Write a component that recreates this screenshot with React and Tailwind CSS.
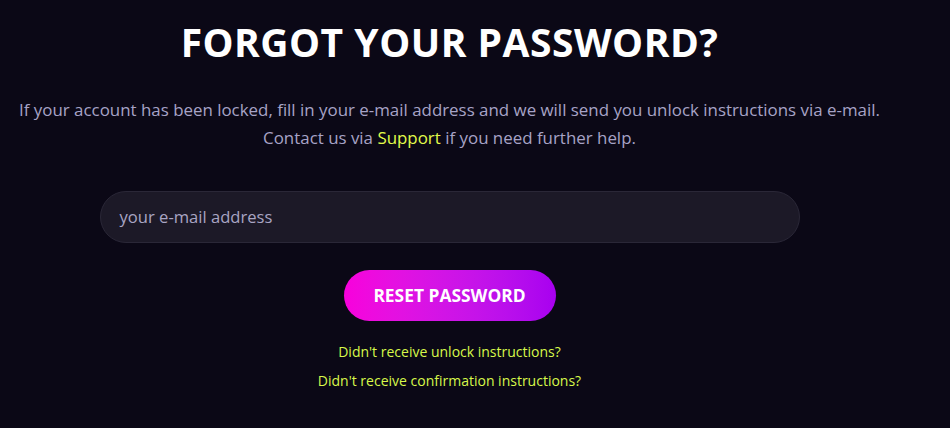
export default function App() {
  return (
    <div className="min-h-[428px] w-full bg-[#0b0816]" style={{ fontFamily: '"Open Sans", "Noto Sans", sans-serif' }}>
      <div className="flex w-[899px] flex-col items-center pt-[18px]">
        <h1 className="text-[39px] font-bold leading-[48px] tracking-[0.5px] text-white">FORGOT YOUR PASSWORD?</h1>
        <p className="mt-[30px] text-center text-[16.9px] leading-[28px] text-[#a7a3c6]">
          If your account has been locked, fill in your e-mail address and we will send you unlock instructions via e-mail.
          <br />
          Contact us via <span className="text-[#e2fb4a]">Support</span> if you need further help.
        </p>
        <div className="mt-[39px] flex h-[52px] w-[700px] items-center rounded-full border border-[#2a2737] bg-[#1c1927] pl-[19px]">
          <span className="text-[16.6px] text-[#a9a5c3]">your e-mail address</span>
        </div>
        <button className="mt-[27px] flex h-[51px] w-[212px] items-center justify-center rounded-full bg-gradient-to-r from-[#f800dc] to-[#a800f0] text-[17.4px] font-bold text-white">
          RESET PASSWORD
        </button>
        <div className="mt-[22px] text-[14px] leading-[17px] text-[#d8f84a]">Didn't receive unlock instructions?</div>
        <div className="mt-[12px] text-[14px] leading-[17px] text-[#d8f84a]">Didn't receive confirmation instructions?</div>
      </div>
    </div>
  );
}
